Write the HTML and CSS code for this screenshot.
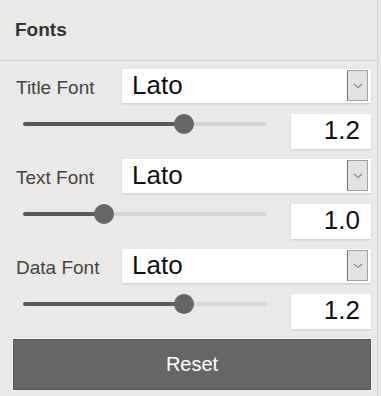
FILE: index.html
```html
<!DOCTYPE html>
<html lang="en">
<head>
    <meta charset="UTF-8">
    <meta name="viewport" content="width=device-width, initial-scale=1.0">
    <title>Fonts</title>
    <link rel="stylesheet" href="styles.css">
</head>
<body>

    <div class="panel">
        <div class="panel-header">Fonts</div>

        <div class="panel-body">
            <div class="font-group">
                <div class="font-row">
                    <label class="font-label">Title Font</label>
                    <div class="select-box">
                        <span class="select-value">Lato</span>
                        <span class="select-arrow">
                            <svg width="10" height="6" viewBox="0 0 10 6"><path d="M1 1 L5 4.5 L9 1" fill="none" stroke="#8a8a8a" stroke-width="1.2"/></svg>
                        </span>
                    </div>
                </div>
                <div class="scale-row">
                    <div class="slider">
                        <div class="slider-fill" style="width: 66%"></div>
                        <div class="slider-thumb" style="left: 66%"></div>
                    </div>
                    <div class="number-box">1.2</div>
                </div>
            </div>

            <div class="font-group">
                <div class="font-row">
                    <label class="font-label">Text Font</label>
                    <div class="select-box">
                        <span class="select-value">Lato</span>
                        <span class="select-arrow">
                            <svg width="10" height="6" viewBox="0 0 10 6"><path d="M1 1 L5 4.5 L9 1" fill="none" stroke="#8a8a8a" stroke-width="1.2"/></svg>
                        </span>
                    </div>
                </div>
                <div class="scale-row">
                    <div class="slider">
                        <div class="slider-fill" style="width: 33%"></div>
                        <div class="slider-thumb" style="left: 33%"></div>
                    </div>
                    <div class="number-box">1.0</div>
                </div>
            </div>

            <div class="font-group">
                <div class="font-row">
                    <label class="font-label">Data Font</label>
                    <div class="select-box">
                        <span class="select-value">Lato</span>
                        <span class="select-arrow">
                            <svg width="10" height="6" viewBox="0 0 10 6"><path d="M1 1 L5 4.5 L9 1" fill="none" stroke="#8a8a8a" stroke-width="1.2"/></svg>
                        </span>
                    </div>
                </div>
                <div class="scale-row">
                    <div class="slider">
                        <div class="slider-fill" style="width: 66%"></div>
                        <div class="slider-thumb" style="left: 66%"></div>
                    </div>
                    <div class="number-box">1.2</div>
                </div>
            </div>

            <button class="reset-button">Reset</button>
        </div>
    </div>

</body>
</html>
```

FILE: styles.css
```css
* {
    box-sizing: border-box;
}

body {
    margin: 0;
    font-family: 'Liberation Sans', Arial, sans-serif;
    background-color: #e6e5e3;
    height: 396px;
    overflow: hidden;
}

.panel {
    width: 378px;
    height: 396px;
    background-color: #eae9e7;
    border-right: 1px solid #d6d4d2;
}

.panel-header {
    height: 61px;
    line-height: 60px;
    padding-left: 15px;
    font-size: 19px;
    font-weight: bold;
    color: #333;
    border-bottom: 1px solid #d6d4d2;
}

.panel-body {
    padding: 8px 6px 0 13px;
}

.font-group {
    margin-bottom: 10px;
}

.font-row {
    display: flex;
    align-items: center;
    height: 34px;
}

.font-label {
    width: 109px;
    padding-left: 3px;
    padding-top: 3px;
    font-size: 19px;
    color: #444;
}

.select-box {
    flex: 1;
    height: 34px;
    background-color: #fff;
    box-shadow: 0 1px 2px rgba(0, 0, 0, 0.15);
    display: flex;
    align-items: center;
    justify-content: space-between;
    padding: 1px 3px 2px 10px;
}

.select-value {
    font-size: 26px;
    color: #111;
}

.select-arrow {
    width: 21px;
    height: 31px;
    background-color: #e2e2e2;
    border: 1px solid #a0a0a0;
    border-left-color: #707070;
    display: flex;
    align-items: center;
    justify-content: center;
}

.scale-row {
    display: flex;
    align-items: flex-start;
    margin-top: 11px;
}

.slider {
    position: relative;
    width: 244px;
    height: 4px;
    margin: 8px 24px 0 10px;
    background-color: #d8d7d5;
    border-radius: 2px;
}

.slider-fill {
    height: 4px;
    background-color: #595959;
    border-radius: 2px;
}

.slider-thumb {
    position: absolute;
    top: -8px;
    width: 20px;
    height: 20px;
    margin-left: -10px;
    border-radius: 50%;
    background-color: #666;
}

.number-box {
    width: 80px;
    height: 35px;
    background-color: #fff;
    box-shadow: 0 1px 2px rgba(0, 0, 0, 0.15);
    text-align: right;
    padding-right: 11px;
    font-size: 26px;
    line-height: 33px;
    color: #111;
}

.reset-button {
    display: block;
    width: 100%;
    height: 51px;
    background-color: #666;
    border: 1px solid #555;
    box-shadow: 0 0 0 1px #f4f3f1;
    color: #fff;
    font-family: 'Liberation Sans', Arial, sans-serif;
    font-size: 20px;
    padding: 0;
    cursor: pointer;
}
```
